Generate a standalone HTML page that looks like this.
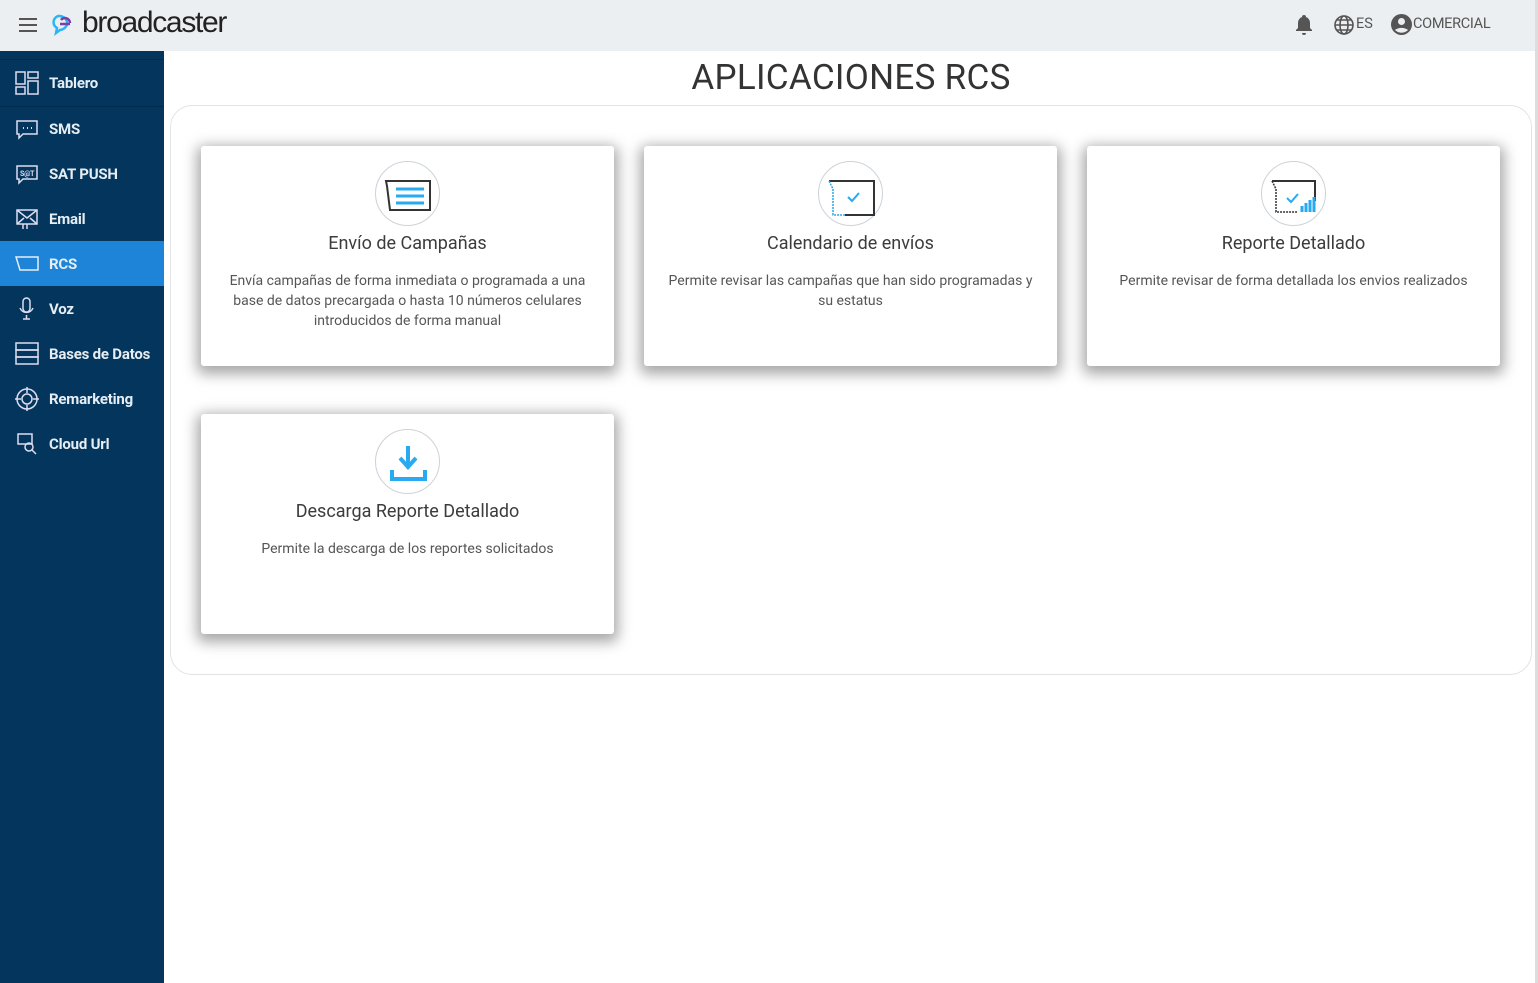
<!DOCTYPE html>
<html><head><meta charset="utf-8"><style>
*{box-sizing:border-box;margin:0;padding:0}
body{width:1538px;height:983px;overflow:hidden;font-family:"Roboto","Liberation Sans",sans-serif;background:#fff;position:relative}
.hdr{position:absolute;left:0;top:0;width:1538px;height:51px;background:#eceff1}
.side{position:absolute;left:0;top:51px;width:164px;height:932px;background:#04355d}
.item{position:absolute;left:0;width:164px;height:45px;color:#e6edf3;font-size:15px;font-weight:bold;display:flex;align-items:center;padding-left:49px;letter-spacing:-.2px}
.item svg{position:absolute;left:15px;top:11px}
.act{background:#1e84d8}
.title{position:absolute;left:164px;width:1374px;top:57px;text-align:center;font-size:35px;color:#333;letter-spacing:.3px}
.box{position:absolute;left:170px;top:105px;width:1362px;height:570px;border:1px solid #e3e3e3;border-radius:22px}
.card{position:absolute;width:413px;height:220px;background:#fff;border-radius:3px;box-shadow:0 4px 14px 4px rgba(0,0,0,.35);text-align:center}
.ic{position:absolute;left:174px;top:15px;width:65px;height:65px;border:1px solid #ccd3d9;border-radius:50%}
.ic svg{position:absolute;left:0;top:0}
.ct{position:absolute;top:87px;width:100%;font-size:18px;color:#3c3c3c}
.cd{position:absolute;top:125px;left:22px;right:22px;font-size:14px;line-height:20px;color:#555}
.sb{position:absolute;right:0;top:0;width:3px;height:983px;background:#ddd}
</style></head><body>
<div class="hdr">
<svg style="position:absolute;left:18px;top:17px" width="20" height="16"><path d="M1 2H19M1 8H19M1 14H19" stroke="#555" stroke-width="2"/></svg>
<svg style="position:absolute;left:52px;top:12px" width="26" height="26"><path d="M6 4a8 7 0 1 1 2 14l-4 3 1-5A8 7 0 0 1 6 4z" fill="none" stroke="#29b6f6" stroke-width="2.5"/><path d="M8 12h10M9 8a5 5 0 0 1 9 3" fill="none" stroke="#7b3fa6" stroke-width="2.5"/></svg>
<div style="position:absolute;left:82px;top:6px;font-size:30px;color:#222;letter-spacing:-1.3px;font-family:'Liberation Sans',sans-serif">broadcaster</div>
<svg style="position:absolute;left:1295px;top:14px" width="18" height="22"><path d="M9 1a2 2 0 0 1 2 2 6 6 0 0 1 4 6v5l2 2v1H1v-1l2-2V9a6 6 0 0 1 4-6 2 2 0 0 1 2-2zM7 19h4a2 2 0 0 1-4 0z" fill="#555"/></svg>
<svg style="position:absolute;left:1333px;top:14px" width="22" height="22" fill="none" stroke="#555" stroke-width="1.6"><circle cx="11" cy="11" r="9"/><ellipse cx="11" cy="11" rx="4" ry="9"/><path d="M2 11h18M4 6h14M4 16h14"/></svg>
<div style="position:absolute;left:1356px;top:15px;font-size:14.5px;color:#555">ES</div>
<svg style="position:absolute;left:1390px;top:13px" width="23" height="23"><circle cx="11.5" cy="11.5" r="10.5" fill="#555"/><circle cx="11.5" cy="8.5" r="3.5" fill="#eceff1"/><path d="M5 17a8 5 0 0 1 13 0a9 9 0 0 1-13 0z" fill="#eceff1"/></svg>
<div style="position:absolute;left:1413px;top:15px;font-size:14.5px;color:#555;letter-spacing:-.3px">COMERCIAL</div>
</div>
<div class="side">
<div style="position:absolute;top:8px;width:164px;border-top:1px solid #022a4b"></div>
<div style="position:absolute;top:55px;width:164px;border-top:1px solid #022a4b"></div>
<div class="item" style="top:9px"><svg width="24" height="24" fill="none" stroke="#dde" stroke-width="1.5"><rect x="1" y="1" width="9" height="12"/><rect x="13" y="1" width="10" height="6"/><rect x="13" y="10" width="10" height="13"/><rect x="1" y="16" width="9" height="7"/></svg>Tablero</div>
<div class="item" style="top:55px"><svg width="24" height="24" fill="none" stroke="#dde" stroke-width="1.5"><path d="M2 4h20v13H8l-4 4v-4H2z"/><path d="M8 11h1M12 11h1M16 11h1" stroke-width="2"/></svg>SMS</div>
<div class="item" style="top:100px"><svg width="24" height="24" fill="none" stroke="#dde" stroke-width="1.5"><path d="M2 4h20v13H8l-4 4v-4H2z"/><text x="5" y="14" font-size="7" fill="#dde" stroke="none" font-weight="bold">S@T</text></svg>SAT PUSH</div>
<div class="item" style="top:145px"><svg width="24" height="24" fill="none" stroke="#dde" stroke-width="1.5"><rect x="2" y="3" width="20" height="14"/><path d="M2 3l10 8 10-8M2 17l7-6M22 17l-7-6M8 17v5M12 17v5"/></svg>Email</div>
<div class="item act" style="top:190px"><svg width="24" height="24" fill="none" stroke="#e6edf3" stroke-width="1.5"><path d="M1 5h22v13H5z"/></svg>RCS</div>
<div class="item" style="top:235px"><svg width="24" height="24" fill="none" stroke="#dde" stroke-width="1.5"><rect x="8" y="1" width="7" height="14" rx="3.5"/><path d="M5 11a7 7 0 0 0 13 0M11.5 18v4M8 22h7"/></svg>Voz</div>
<div class="item" style="top:280px"><svg width="24" height="24" fill="none" stroke="#dde" stroke-width="1.5"><rect x="1" y="1" width="22" height="7"/><rect x="1" y="8" width="22" height="7"/><rect x="1" y="15" width="22" height="7"/></svg>Bases de Datos</div>
<div class="item" style="top:325px"><svg width="24" height="24" fill="none" stroke="#dde" stroke-width="1.5"><circle cx="12" cy="12" r="10"/><circle cx="12" cy="12" r="5"/><path d="M12 0v6M12 18v6M0 12h6M18 12h6"/></svg>Remarketing</div>
<div class="item" style="top:370px"><svg width="24" height="24" fill="none" stroke="#dde" stroke-width="1.5"><path d="M3 2h14v10H3z"/><circle cx="14" cy="15" r="4"/><path d="M17 18l4 4"/></svg>Cloud Url</div>
</div>
<div class="title">APLICACIONES RCS</div>
<div class="box"></div>
<div class="card" style="left:201px;top:146px"><div class="ic"><svg width="65" height="65"><path d="M10 19h44v29H14L11 24z" fill="none" stroke="#333" stroke-width="2"/><path d="M20 27h28M20 34h28M20 41h28" stroke="#29a9f0" stroke-width="3"/></svg></div><div class="ct">Envío de Campañas</div><div class="cd">Envía campañas de forma inmediata o programada a una base de datos precargada o hasta 10 números celulares introducidos de forma manual</div></div>
<div class="card" style="left:644px;top:146px"><div class="ic"><svg width="65" height="65"><path d="M10 19h45v34H26" fill="none" stroke="#333" stroke-width="2"/><path d="M10 19l4 8v26h12" fill="none" stroke="#29a9f0" stroke-width="1.5" stroke-dasharray="2 1"/><path d="M29 35l4 4 7-8" fill="none" stroke="#29a9f0" stroke-width="2"/></svg></div><div class="ct">Calendario de envíos</div><div class="cd">Permite revisar las campañas que han sido programadas y su estatus</div></div>
<div class="card" style="left:1087px;top:146px"><div class="ic"><svg width="65" height="65"><path d="M10 19h43v20" fill="none" stroke="#333" stroke-width="2"/><path d="M10 19l4 8v23h22" fill="none" stroke="#333" stroke-width="1.5" stroke-dasharray="2 1"/><path d="M25 36l4 4 7-8" fill="none" stroke="#29a9f0" stroke-width="2"/><path d="M40 50v-6M44 50v-9M48 50v-12M52 50v-15" stroke="#29a9f0" stroke-width="3"/></svg></div><div class="ct">Reporte Detallado</div><div class="cd">Permite revisar de forma detallada los envios realizados</div></div>
<div class="card" style="left:201px;top:414px"><div class="ic"><svg width="65" height="65"><path d="M32 16v20M24 28l8 9 8-9" fill="none" stroke="#29a9f0" stroke-width="4"/><path d="M16 40v9h33v-9" fill="none" stroke="#29a9f0" stroke-width="4"/></svg></div><div class="ct">Descarga Reporte Detallado</div><div class="cd">Permite la descarga de los reportes solicitados</div></div>
<div class="sb"></div>
</body></html>
